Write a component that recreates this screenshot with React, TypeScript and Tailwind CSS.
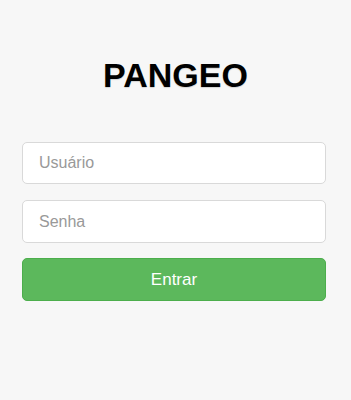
export default function App() {
  return (
    <div className="min-h-[400px] w-full bg-[#f7f7f7] pt-[52px] font-['Liberation_Sans',Arial,sans-serif]">
      <h1 className="text-center text-[34px] font-bold leading-[46px] text-black [text-shadow:0_1px_1px_rgba(0,0,0,0.15)]">
        PANGEO
      </h1>

      <form className="ml-[22px] mt-[44px] flex w-[304px] flex-col">
        <input
          type="text"
          placeholder="Usuário"
          className="h-[42px] w-full rounded-[5px] border border-[#d9d9d9] bg-white px-4 text-[16px] text-[#555] placeholder:text-[#999] focus:outline-none"
        />
        <input
          type="password"
          placeholder="Senha"
          className="mt-[16px] h-[43px] w-full rounded-[5px] border border-[#d9d9d9] bg-white px-4 text-[16px] text-[#555] placeholder:text-[#999] focus:outline-none"
        />
        <button
          type="submit"
          className="mt-[15px] h-[43px] w-full rounded-[5px] border border-[#4cae4c] bg-[#5cb85c] text-[17px] text-white"
        >
          Entrar
        </button>
      </form>
    </div>
  );
}
